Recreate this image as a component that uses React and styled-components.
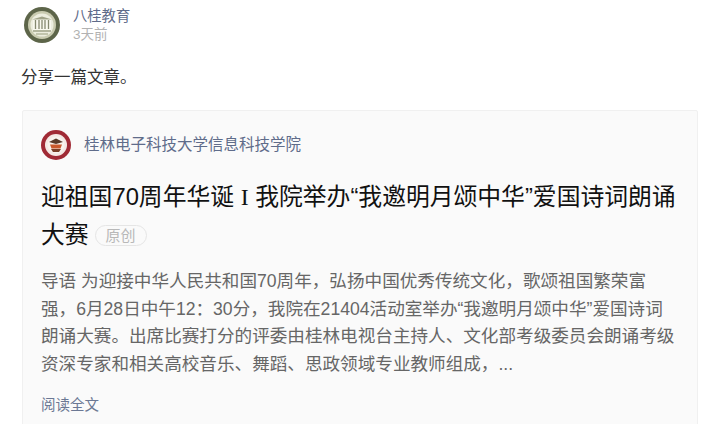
import styled, { createGlobalStyle } from 'styled-components';

const GlobalStyle = createGlobalStyle`
html, body {
  margin: 0;
  padding: 0;
  background: #fff;
  overflow: hidden;
  font-family: "Liberation Sans", "Noto Sans CJK SC", sans-serif;
}
`;

function SchoolLogo() {
  return (
    <svg width="36" height="36" viewBox="0 0 36 36">
      <circle cx="18" cy="18" r="18" fill="#5d6549" />
      <circle cx="18" cy="18" r="14" fill="#c9cbb0" />
      <circle cx="18" cy="18" r="11.500" fill="#ecedde" />
      <rect x="9" y="12" width="18" height="11" fill="#f8f8ee" />
      <path d="M8 12.500 L18 9.500 L28 12.500 Z" fill="#a0a388" />
      <path d="M11.500 13v9M15 13v9M18 13v9M21 13v9M24.500 13v9" stroke="#858970" strokeWidth="1.300" />
      <path d="M9 24h18" stroke="#a0a388" strokeWidth="1.500" />
      <path d="M12 27h12" stroke="#b5b79d" strokeWidth="1.500" />
    </svg>
  );
}

function CollegeLogo() {
  return (
    <svg width="30" height="30" viewBox="0 0 30 30">
      <circle cx="15" cy="15" r="15" fill="#a02a35" />
      <circle cx="15" cy="15" r="11" fill="#f4e8e4" />
      <circle cx="15" cy="15" r="8.500" fill="#f8f3ee" />
      <path d="M8 12 L15 8.500 L22 12 L15 14 Z" fill="#5a3a2a" />
      <path d="M9 14.500h12l-1.500 4h-9z" fill="#c9582c" />
      <path d="M10 19h10l-2 3h-6z" fill="#7a3f28" />
    </svg>
  );
}

export default function App() {
  return (
    <Page>
      <GlobalStyle />
      <Author>
        <SchoolLogo />
        <AuthorInfo>
          <AuthorName>八桂教育</AuthorName>
          <PostTime>3天前</PostTime>
        </AuthorInfo>
      </Author>
      <Message>分享一篇文章。</Message>
      <Card>
        <Source>
          <CollegeLogo />
          <SourceName>桂林电子科技大学信息科技学院</SourceName>
        </Source>
        <Title>
          迎祖国70周年华诞 <SerifLetter>I</SerifLetter> 我院举办“我邀明月颂中华”爱国诗词朗诵大赛
          <Badge>原创</Badge>
        </Title>
        <Summary>
          导语 为迎接中华人民共和国70周年，弘扬中国优秀传统文化，歌颂祖国繁荣富强，6月28日中午12：30分，我院在21404活动室举办“我邀明月颂中华”爱国诗词朗诵大赛。出席比赛打分的评委由桂林电视台主持人、文化部考级委员会朗诵考级资深专家和相关高校音乐、舞蹈、思政领域专业教师组成，...
        </Summary>
        <ReadMore>阅读全文</ReadMore>
      </Card>
    </Page>
  );
}

const Page = styled.div`
width: 712px;
height: 424px;
box-sizing: border-box;
padding: 6px 14px 0 22px;
overflow: hidden;
`;

const Author = styled.div`
display: flex;
align-items: center;
gap: 13px;
padding-left: 2px;
`;

const AuthorInfo = styled.div`
display: flex;
flex-direction: column;
`;

const AuthorName = styled.div`
font-size: 14.300px;
line-height: 20px;
color: #5f6c8a;
`;

const PostTime = styled.div`
font-size: 13.500px;
line-height: 17px;
color: #b2b2b2;
`;

const Message = styled.div`
margin-top: 23px;
margin-left: -1px;
font-size: 16.500px;
line-height: 22px;
color: #333;
`;

const Card = styled.div`
margin-top: 22px;
padding: 19px 19px 0 18px;
height: 320px;
box-sizing: border-box;
background: #fafafa;
border: 1px solid #f0f0f0;
border-radius: 2px;
`;

const Source = styled.div`
display: flex;
align-items: center;
gap: 13px;
`;

const SourceName = styled.div`
font-size: 15.500px;
line-height: 30px;
color: #5f6c8a;
`;

const Title = styled.div`
margin-top: 18px;
font-size: 23.800px;
line-height: 37px;
color: #111;
`;

const SerifLetter = styled.span`
font-family: "Liberation Serif", serif;
`;

const Badge = styled.span`
display: inline-block;
margin-left: 6px;
padding: 0 10px;
font-size: 15px;
line-height: 19px;
color: #b8b8b8;
border: 1px solid #e5e5e5;
border-radius: 11px;
vertical-align: 2px;
`;

const Summary = styled.div`
margin-top: 15px;
font-size: 17.600px;
line-height: 27.600px;
color: #666;
`;

const ReadMore = styled.div`
margin-top: 17px;
font-size: 14.500px;
line-height: 20px;
color: #6b7894;
`;
